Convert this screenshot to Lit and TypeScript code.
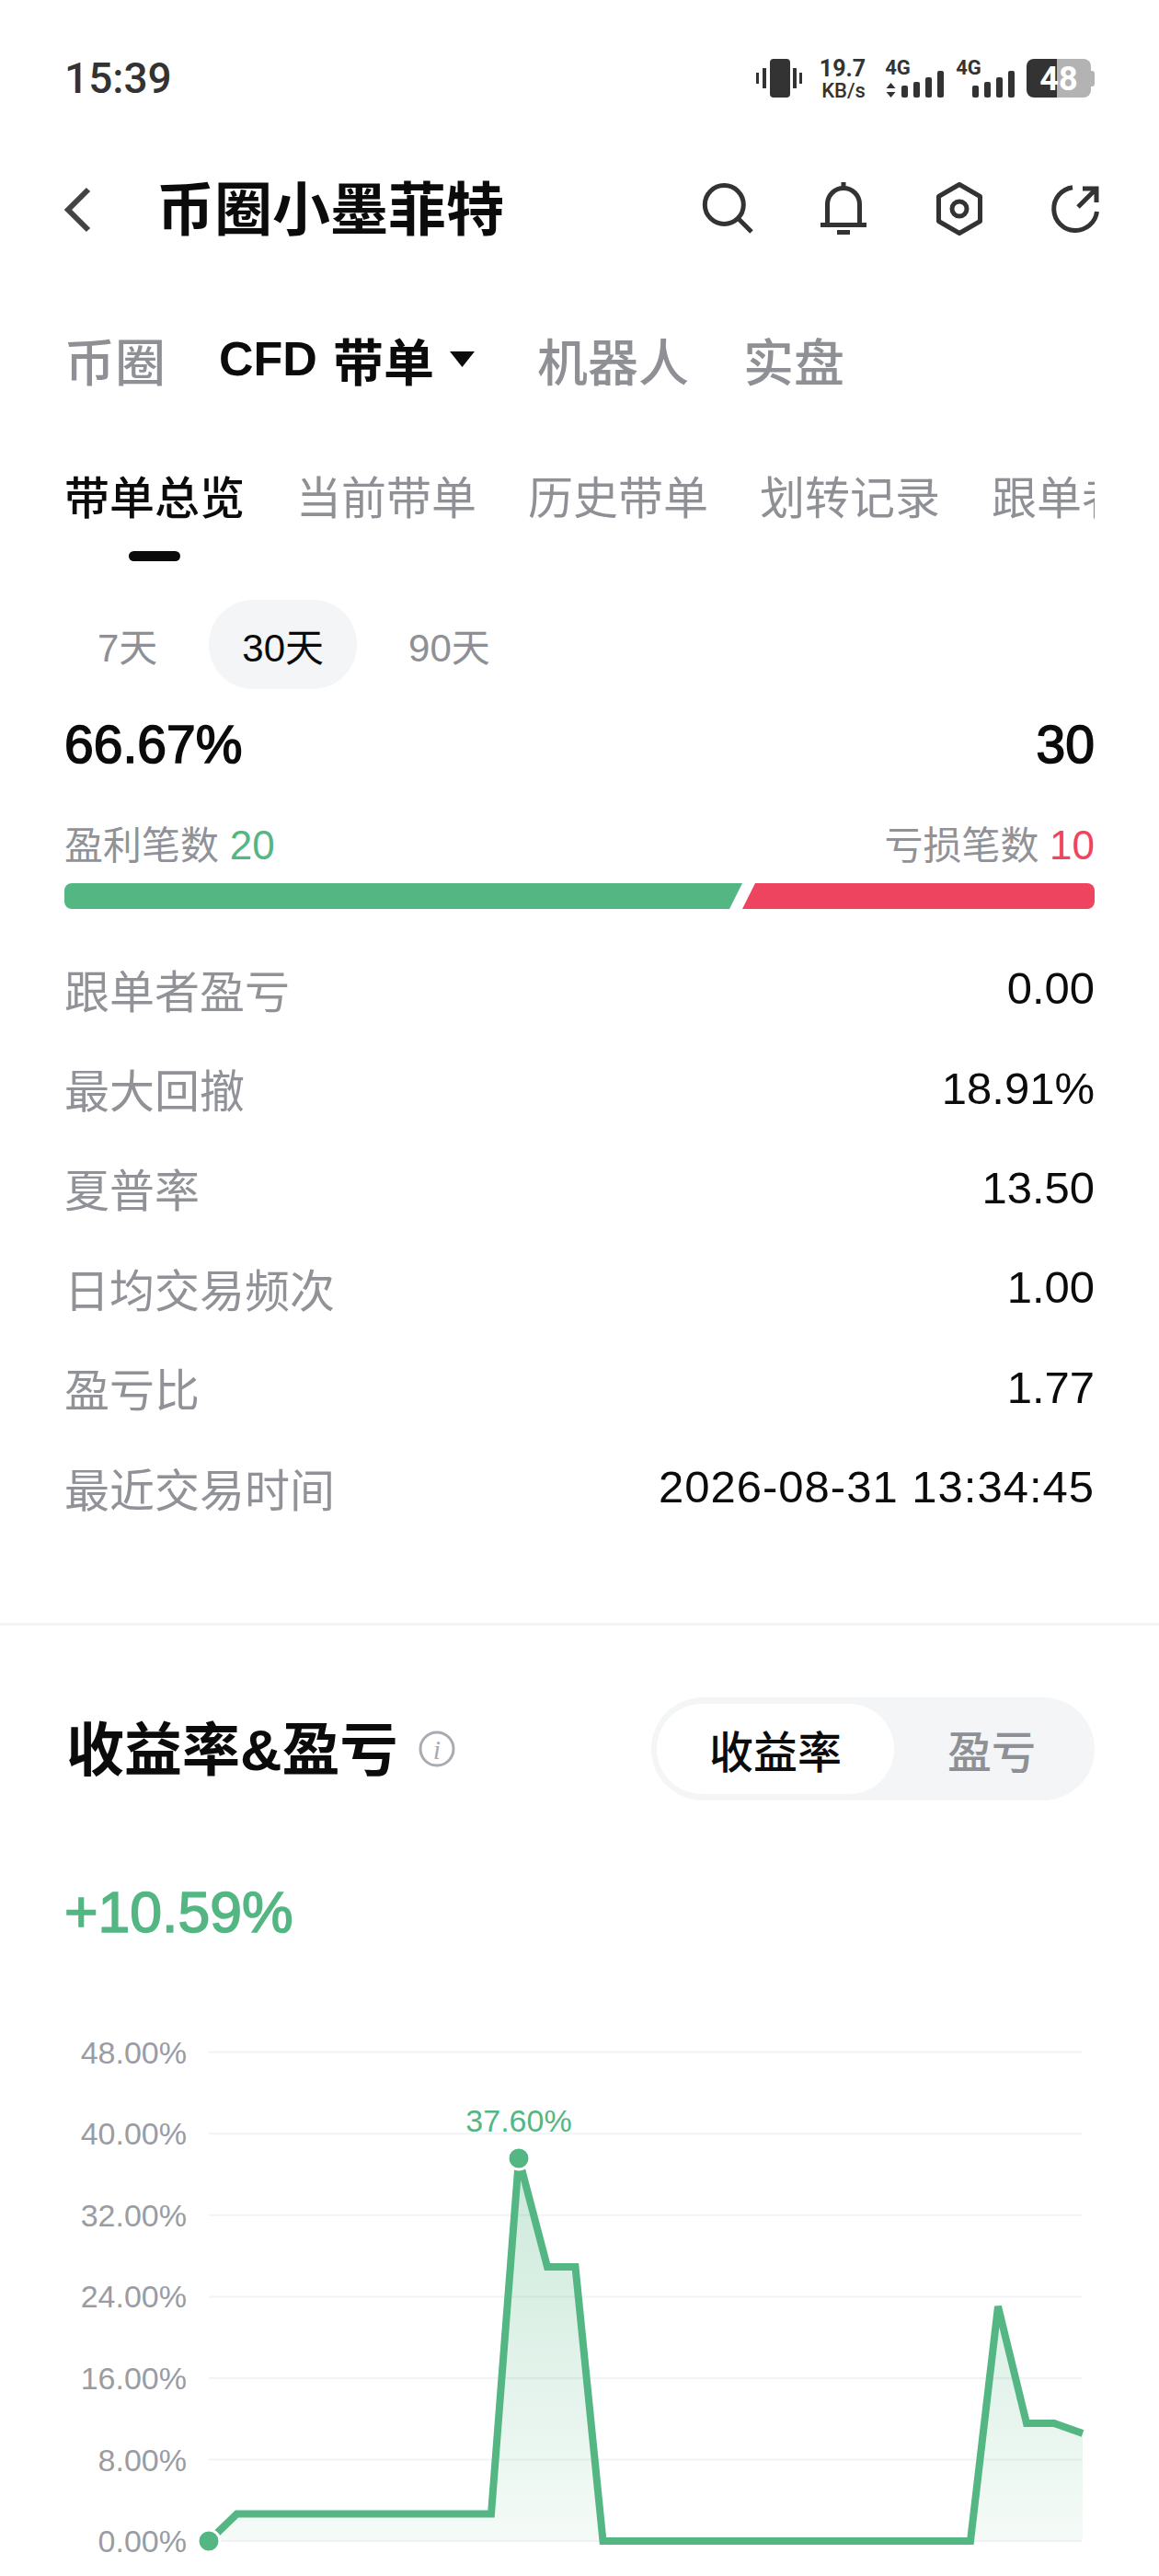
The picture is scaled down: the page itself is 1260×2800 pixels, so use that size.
import { LitElement, css, html, svg } from 'lit';
import { customElement } from 'lit/decorators.js';

const GRID = [
  { y: 2230.6, label: '48.00%' },
  { y: 2319.2, label: '40.00%' },
  { y: 2407.8, label: '32.00%' },
  { y: 2496.4, label: '24.00%' },
  { y: 2585, label: '16.00%' },
  { y: 2673.6, label: '8.00%' },
  { y: 2762.2, label: '0.00%' },
];

// chart canvas starts at page y 2200
const CHART_TOP = 2200;
const POINTS: [number, number][] = [
  [227, 2762],
  [257.5, 2732.5],
  [534, 2732.5],
  [564, 2346],
  [595, 2464],
  [625.5, 2464],
  [655.5, 2762],
  [1055, 2762],
  [1085, 2507],
  [1116, 2634],
  [1146, 2634],
  [1177, 2645],
];

const ROWS = [
  ['跟单者盈亏', '0.00'],
  ['最大回撤', '18.91%'],
  ['夏普率', '13.50'],
  ['日均交易频次', '1.00'],
  ['盈亏比', '1.77'],
  ['最近交易时间', '2026-08-31 13:34:45'],
];

const linePath = POINTS.map(([x, y]) => `${x},${y - CHART_TOP}`).join(' ');
const areaPath = `${linePath} 1177,${2762 - CHART_TOP} 227,${2762 - CHART_TOP}`;

@customElement('app-root')
export class AppRoot extends LitElement {
  static styles = css`
    :host {
      display: block;
      width: 1260px;
      height: 2800px;
      overflow: hidden;
      background: #fff;
      font-family: 'Liberation Sans', 'Noto Sans CJK SC', sans-serif;
      color: #0b0b0c;
    }
    .status {
      height: 170px;
      padding-left: 70px;
      display: flex;
      align-items: center;
      justify-content: space-between;
    }
    .time {
      font: 500 46px Roboto, sans-serif;
      color: #333;
    }
    .status-icons {
      display: block;
    }
    .header {
      height: 116px;
      padding-left: 70px;
      display: flex;
      align-items: center;
    }
    .back {
      width: 100px;
      display: block;
    }
    .title {
      font-size: 63px;
      font-weight: 700;
      flex: 1;
      line-height: 1;
    }
    .tabs {
      height: 208px;
      padding: 0 70px;
      display: flex;
      align-items: center;
      font-size: 55px;
      color: #8e9095;
      font-weight: 500;
    }
    .tabs .on {
      color: #0b0b0c;
      margin-left: 58px;
      margin-right: 68px;
      display: flex;
      align-items: center;
      gap: 17px;
      font-weight: 600;
    }
    .tabs .on b {
      font-size: 52px;
      font-weight: 700;
    }
    .tabs .last {
      margin-left: 59px;
    }
    .subtabs {
      height: 92px;
      margin: -3px 0 3px 70px;
      width: 1120px;
      overflow: hidden;
      display: flex;
      align-items: center;
      gap: 56px;
      font-size: 49px;
      color: #8e9095;
      white-space: nowrap;
    }
    .subtabs span {
      flex: none;
    }
    .subtabs .on {
      color: #0b0b0c;
      font-weight: 500;
    }
    .underline {
      width: 56px;
      height: 11px;
      margin: 16px 0 0 140px;
      border-radius: 6px;
      background: #0b0b0c;
    }
    .pills {
      margin: 42px 0 0 70px;
      height: 97px;
      display: flex;
      gap: 20px;
      font-size: 42px;
      color: #8e9095;
    }
    .pill {
      padding: 0 36px;
      display: flex;
      align-items: center;
      border-radius: 48px;
    }
    .pill.on {
      color: #0b0b0c;
      background: #f3f5f7;
    }
    .scroll {
      margin-top: 11px;
      height: 1004px;
      overflow: hidden;
      padding: 0 70px;
    }
    .peek {
      height: 0;
      display: flex;
      justify-content: space-between;
      font-size: 42px;
      line-height: 42px;
      color: #8e9095;
      transform: translateY(-39px);
    }
    .big {
      margin-top: 20px;
      display: flex;
      justify-content: space-between;
      font-size: 57px;
      line-height: 58px;
      -webkit-text-stroke: 1.6px #0b0b0c;
    }
    .counts {
      margin-top: 52px;
      height: 50px;
      display: flex;
      justify-content: space-between;
      align-items: center;
      font-size: 42px;
      color: #909297;
    }
    .counts .up,
    .counts .down {
      font-size: 44px;
    }
    .up {
      color: #53b683;
    }
    .down {
      color: #ee4460;
    }
    .bar {
      margin-top: 20px;
      height: 28px;
      display: flex;
    }
    .bar .g {
      width: 737px;
      background: #53b683;
      border-radius: 8px 0 0 8px;
      clip-path: polygon(0 0, 100% 0, calc(100% - 14px) 100%, 0 100%);
    }
    .bar .r {
      flex: 1;
      background: #ee4460;
      border-radius: 0 8px 8px 0;
      clip-path: polygon(14px 0, 100% 0, 100% 100%, 0 100%);
    }
    .rows {
      margin-top: 32px;
    }
    .row {
      height: 108.4px;
      display: flex;
      justify-content: space-between;
      align-items: center;
    }
    .row .k {
      font-size: 49px;
      color: #909297;
    }
    .row .v {
      font-size: 49px;
    }
    .row:last-child .v {
      letter-spacing: 1px;
    }
    .divider {
      height: 3px;
      background: #f1f3f4;
    }
    .section {
      height: 268px;
      padding: 0 70px 0 72px;
      display: flex;
      align-items: center;
    }
    .section h2 {
      margin: 3px 0 0;
      font-size: 63px;
      font-weight: 700;
      line-height: 1;
    }
    .info {
      margin: 0 0 0 22px;
      display: block;
    }
    .toggle {
      margin-left: auto;
      width: 482px;
      height: 112px;
      box-sizing: border-box;
      padding: 6px;
      border-radius: 56px;
      background: #f3f5f7;
      display: flex;
      align-items: center;
      font-size: 48px;
      color: #8e9095;
      font-weight: 500;
    }
    .toggle span {
      display: flex;
      align-items: center;
      justify-content: center;
      height: 98px;
      flex: 1;
      border-radius: 49px;
    }
    .toggle .on {
      flex: none;
      width: 258px;
      background: #fff;
      color: #0b0b0c;
    }
    .gain {
      margin: 8px 0 0 70px;
      height: 70px;
      line-height: 70px;
      font-size: 62.5px;
      -webkit-text-stroke: 1.6px #53b683;
      color: #53b683;
    }
    .chart {
      display: block;
      margin-top: 87px;
    }
    .chart text {
      font-family: 'Liberation Sans', sans-serif;
      font-size: 34px;
    }
  `;

  private renderStatusIcons() {
    return html`<svg class="status-icons" width="440" height="60" viewBox="820 55 440 60">
      <g fill="#333">
        <rect x="837" y="64" width="22" height="42" rx="4" />
        <rect x="829" y="74" width="4" height="22" />
        <rect x="822" y="79" width="3" height="12" />
        <rect x="862" y="74" width="4" height="22" />
        <rect x="869" y="79" width="3" height="12" />
        <text x="916" y="83" text-anchor="middle" font-family="Roboto" font-weight="700" font-size="25">19.7</text>
        <text x="917" y="106" text-anchor="middle" font-family="Roboto" font-weight="500" font-size="22">KB/s</text>
        <text x="976" y="81" text-anchor="middle" font-family="Roboto" font-weight="700" font-size="22">4G</text>
        <path d="M968.5 90l5 6h-10zM968.5 106l-5-6h10z" />
        <rect x="980" y="93" width="7" height="13" rx="2" />
        <rect x="993" y="89" width="7" height="17" rx="2" />
        <rect x="1006" y="84" width="7" height="22" rx="2" />
        <rect x="1019" y="77" width="7" height="29" rx="2" />
        <text x="1053" y="81" text-anchor="middle" font-family="Roboto" font-weight="700" font-size="22">4G</text>
        <rect x="1057" y="93" width="7" height="13" rx="2" />
        <rect x="1070" y="89" width="7" height="17" rx="2" />
        <rect x="1083" y="84" width="7" height="22" rx="2" />
        <rect x="1096" y="77" width="7" height="29" rx="2" />
      </g>
      <path d="M1149 64h29a8 8 0 0 1 8 8v26a8 8 0 0 1-8 8h-29z" fill="#b3b3b3" />
      <path d="M1186 77h1a3 3 0 0 1 3 3v11a3 3 0 0 1-3 3h-1z" fill="#b3b3b3" />
      <path d="M1149 64h-25a8 8 0 0 0-8 8v26a8 8 0 0 0 8 8h25z" fill="#333" />
      <text x="1151" y="98" text-anchor="middle" fill="#fff" font-family="Roboto" font-weight="700" font-size="36">48</text>
    </svg>`;
  }

  private renderChart() {
    return html`<svg class="chart" width="1260" height="600" viewBox="0 0 1260 600">
      <defs>
        <linearGradient id="fade" x1="0" y1="0" x2="0" y2="1">
          <stop offset="0" stop-color="#53b683" stop-opacity="0.3" />
          <stop offset="1" stop-color="#53b683" stop-opacity="0.06" />
        </linearGradient>
      </defs>
      ${GRID.map(
        (g) => svg`
          <line x1="227" x2="1176" y1=${g.y - CHART_TOP} y2=${g.y - CHART_TOP} stroke="#f2f3f5" stroke-width="2" />
          <text x="203" y=${g.y - CHART_TOP + 12} text-anchor="end" fill="#9a9ca3">${g.label}</text>
        `,
      )}
      <polygon points=${areaPath} fill="url(#fade)" />
      <polyline points=${linePath} fill="none" stroke="#53b683" stroke-width="8" stroke-linejoin="miter" />
      <circle cx="227" cy="562" r="12" fill="#53b683" stroke="#fff" stroke-width="3" />
      <circle cx="564" cy="146" r="12" fill="#53b683" stroke="#fff" stroke-width="3" />
      <text x="564" y="117" text-anchor="middle" fill="#53b683">37.60%</text>
    </svg>`;
  }

  render() {
    return html`
      <div class="status">
        <span class="time">15:39</span>
        ${this.renderStatusIcons()}
      </div>

      <div class="header">
        <svg class="back" height="50" viewBox="0 0 100 50" fill="none" stroke="#444" stroke-width="6">
          <path d="M26 3L4 25l22 22" />
        </svg>
        <div class="title">币圈小墨菲特</div>
        <svg width="510" height="70" viewBox="750 192 510 70" fill="none" stroke="#333" stroke-width="5">
          <circle cx="787.300" cy="221.500" r="21" />
          <path d="M803 237l14 14" />
          <path d="M899.500 241v-20a17.500 17.500 0 0 1 35 0v20" />
          <path d="M892 243.500h50M917 197v6M910 251.500h14" />
          <path d="M1043 199.500l22.500 13v27l-22.500 13-22.500-13v-27z" stroke-linejoin="round" />
          <circle cx="1043" cy="226" r="8" />
          <path d="M1166 202.700a23.500 23.500 0 1 0 26.500 26.300M1172 224l20-20M1177 204h15v15" />
        </svg>
      </div>

      <div class="tabs">
        <span>币圈</span>
        <span class="on">
          <b>CFD</b>
          <span>带单</span>
          <svg width="27" height="17" viewBox="0 0 27 17"><path d="M0 0h27L13.500 17z" fill="#0b0b0c" /></svg>
        </span>
        <span>机器人</span>
        <span class="last">实盘</span>
      </div>

      <div class="subtabs">
        <span class="on">带单总览</span>
        <span>当前带单</span>
        <span>历史带单</span>
        <span>划转记录</span>
        <span>跟单者</span>
      </div>
      <div class="underline"></div>

      <div class="pills">
        <span class="pill">7天</span>
        <span class="pill on">30天</span>
        <span class="pill">90天</span>
      </div>

      <div class="scroll">
        <div class="peek"><span>胜率</span><span>交易笔数</span></div>
        <div class="big"><span>66.67%</span><span>30</span></div>
        <div class="counts">
          <span>盈利笔数 <span class="up">20</span></span>
          <span>亏损笔数 <span class="down">10</span></span>
        </div>
        <div class="bar"><div class="g"></div><div class="r"></div></div>
        <div class="rows">
          ${ROWS.map(
            ([k, v]) => html`<div class="row"><span class="k">${k}</span><span class="v">${v}</span></div>`,
          )}
        </div>
      </div>

      <div class="divider"></div>

      <div class="section">
        <h2>收益率&amp;盈亏</h2>
        <svg class="info" width="40" height="42" viewBox="0 0 40 42">
          <circle cx="20" cy="21" r="18" fill="none" stroke="#a9abb0" stroke-width="3" />
          <text x="20" y="32" text-anchor="middle" fill="#a9abb0" font-family="Liberation Serif" font-style="italic" font-size="30">i</text>
        </svg>
        <div class="toggle"><span class="on">收益率</span><span>盈亏</span></div>
      </div>

      <div class="gain">+10.59%</div>
      ${this.renderChart()}
    `;
  }
}
